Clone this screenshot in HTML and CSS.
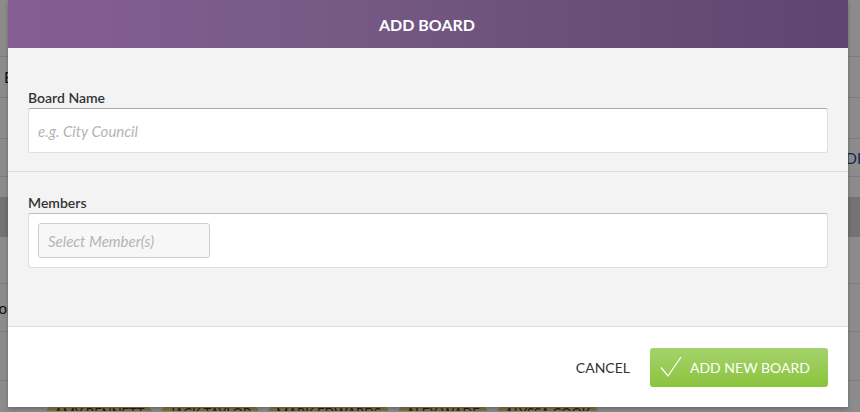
FILE: index.html
```html
<!DOCTYPE html>
<html>
<head>
<meta charset="utf-8">
<link rel="stylesheet" href="styles.css">
</head>
<body>
<div class="page">
  <div class="row row-top"></div>
  <div class="row row-a"><span class="pt-left">Boards</span></div>
  <div class="row row-b"></div>
  <div class="row row-c"><span class="pt-right">EDIT</span></div>
  <div class="row row-gap"></div>
  <div class="row row-band"></div>
  <div class="row row-d"></div>
  <div class="row row-e"><span class="pt-cut">Mayor</span></div>
  <div class="row row-f"></div>
  <div class="row row-chips">
    <span class="chip">AMY BENNETT</span>
    <span class="chip">JACK TAYLOR</span>
    <span class="chip">MARK EDWARDS</span>
    <span class="chip">ALEX WADE</span>
    <span class="chip">ALYSSA COOK</span>
  </div>
</div>
<div class="overlay"></div>
<div class="modal">
  <div class="modal-header">ADD BOARD</div>
  <div class="modal-body">
    <div class="section section-name">
      <label class="field-label">Board Name</label>
      <div class="text-input"><span class="placeholder">e.g. City Council</span></div>
    </div>
    <div class="section section-members">
      <label class="field-label">Members</label>
      <div class="members-box">
        <div class="member-select"><span class="placeholder">Select Member(s)</span></div>
      </div>
    </div>
  </div>
  <div class="modal-footer">
    <span class="cancel">CANCEL</span>
    <div class="btn-add">
      <svg class="check" width="22" height="22" viewBox="0 0 22 22"><path d="M1 11.5 L8 20 L21 1" fill="none" stroke="#fff" stroke-width="1.3"/></svg>
      <span>ADD NEW BOARD</span>
    </div>
  </div>
</div>
</body>
</html>
```
FILE: styles.css
```css
html, body {
  margin: 0;
  padding: 0;
  width: 860px;
  height: 412px;
  overflow: hidden;
  background: #ffffff;
  font-family: Lato, "Open Sans", sans-serif;
}
.page {
  display: flex;
  flex-direction: column;
  height: 412px;
  overflow: hidden;
}
.row {
  flex: none;
  border-bottom: 1px solid #e4e4e4;
  position: relative;
  display: flex;
  align-items: center;
  font-size: 15px;
  color: #222;
  overflow: hidden;
}
.row-top { height: 56px; }
.row-a { height: 40px; }
.row-b { height: 40px; }
.row-c { height: 37px; }
.row-gap { height: 20px; border-bottom: none; }
.row-band { height: 40px; background: #d2d2d2; border-bottom: none; }
.row-d { height: 46px; }
.row-e { height: 47px; }
.row-f { height: 48px; }
.row-chips {
  height: 30px;
  border-bottom: none;
  gap: 9px;
  padding-left: 46px;
  padding-top: 25px;
  align-items: flex-start;
  box-sizing: border-box;
}
.pt-left { padding-left: 4px; }
.pt-cut { margin-left: -30px; }
.pt-right { margin-left: auto; margin-right: -10px; color: #2a3f8f; }
.chip {
  background: #e9cf78;
  color: #333;
  font-size: 13px;
  line-height: 14px;
  border-radius: 10px;
  padding: 0 8px;
}
.overlay {
  position: absolute;
  left: 0;
  top: 0;
  width: 860px;
  height: 412px;
  background: rgba(0, 0, 0, 0.45);
}
.modal {
  position: absolute;
  left: 8px;
  top: 0;
  width: 840px;
  height: 407px;
  display: flex;
  flex-direction: column;
  background: #fff;
  box-shadow: 0 2px 4px rgba(0, 0, 0, 0.25);
}
.modal-header {
  height: 48px;
  flex: none;
  display: flex;
  align-items: center;
  justify-content: center;
  background: linear-gradient(to right, #855e94, #765985 40%, #5e4470);
  color: #fff;
  font-weight: 700;
  font-size: 16px;
  padding-right: 2px;
}
.modal-body {
  background: #f3f3f3;
  border-bottom: 1px solid #dcdcdc;
  display: flex;
  flex-direction: column;
}
.section {
  padding: 0 20px;
  display: flex;
  flex-direction: column;
}
.section-name {
  padding-top: 42px;
  height: 81px;
  border-bottom: 1px solid #dedede;
}
.section-members {
  padding-top: 23px;
  height: 131px;
}
.field-label {
  font-size: 14px;
  font-weight: 600;
  color: #333;
  line-height: 16px;
  margin-bottom: 2px;
}
.text-input {
  height: 43px;
  background: #fff;
  border: 1px solid #dedede;
  border-top-color: #a8a8a8;
  border-radius: 3px;
  display: flex;
  align-items: center;
  padding-left: 9px;
}
.placeholder {
  font-style: italic;
  font-size: 15px;
  color: #b4b4b4;
}
.members-box {
  height: 53px;
  background: #fff;
  border: 1px solid #dedede;
  border-top-color: #bdbdbd;
  border-radius: 3px;
  display: flex;
  align-items: center;
  padding-left: 9px;
}
.member-select {
  box-sizing: border-box;
  width: 172px;
  height: 35px;
  background: #f7f7f7;
  border: 1px solid #cfcfcf;
  border-radius: 3px;
  display: flex;
  align-items: center;
  padding-left: 9px;
}
.modal-footer {
  flex: 1;
  display: flex;
  align-items: center;
  justify-content: flex-end;
  padding: 0 20px;
  gap: 20px;
}
.cancel {
  font-size: 14px;
  color: #333;
}
.btn-add {
  width: 178px;
  height: 39px;
  box-sizing: border-box;
  border-radius: 3px;
  background: linear-gradient(to bottom, #a5d36c, #8bc43e);
  display: flex;
  align-items: center;
  color: #fff;
  font-size: 14px;
  padding-left: 10px;
  gap: 8px;
}
.check { flex: none; }
```
